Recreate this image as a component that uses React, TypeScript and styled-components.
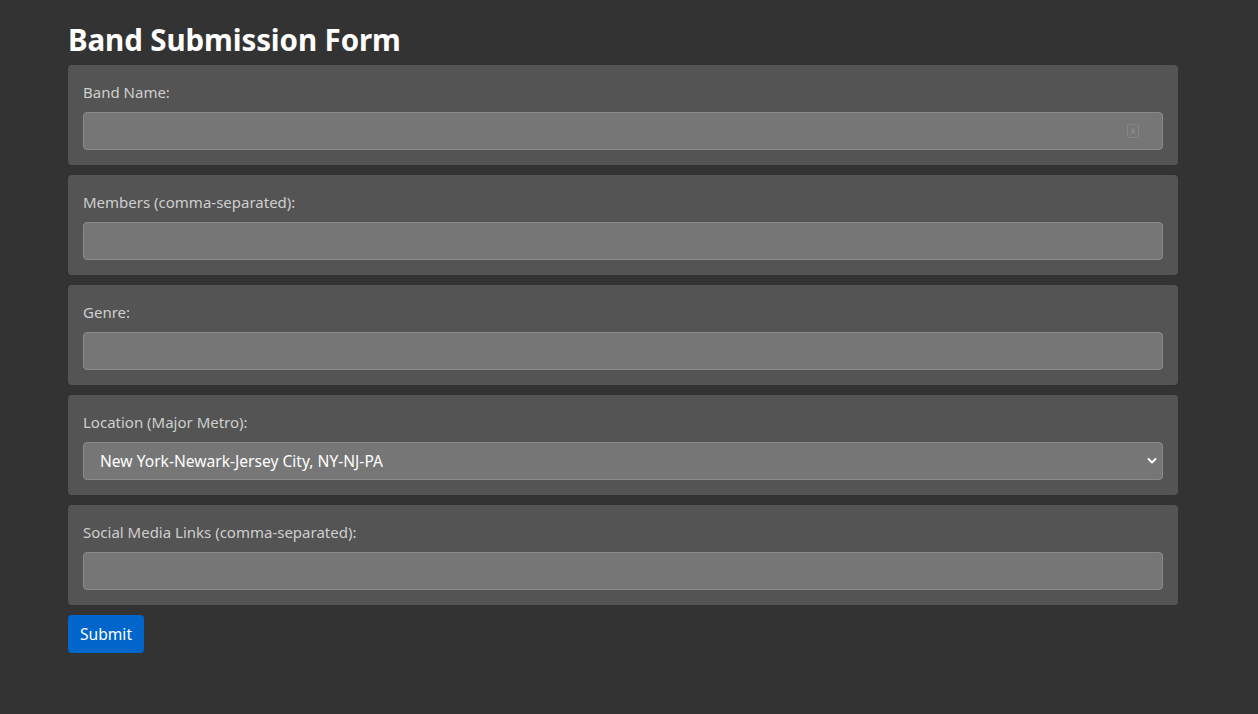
import React from "react";
import styled, { createGlobalStyle } from "styled-components";

const Global = createGlobalStyle`
  html, body { margin: 0; padding: 0; background: #333333; }
  body { font-family: "Noto Sans", "Open Sans", sans-serif; color: #ffffff; }
  * { box-sizing: border-box; }
`;

const Page = styled.div`
  width: 1110px;
  margin-left: 68px;
  padding-top: 18px;
`;

const Title = styled.h1`
  margin: 0 0 3px 0;
  font-size: 29.5px;
  font-weight: 700;
  line-height: 44px;
  letter-spacing: -0.1px;
  color: #ffffff;
`;

const Form = styled.form`
  display: flex;
  flex-direction: column;
  gap: 10px;
`;

const Card = styled.div`
  background: #545454;
  border-radius: 4px;
  padding: 15px;
  height: 100px;
`;

const Label = styled.label`
  display: block;
  font-size: 15px;
  line-height: 24px;
  color: #cfcfcf;
  margin-bottom: 8px;
`;

const FieldWrap = styled.div`
  position: relative;
`;

const Input = styled.input`
  display: block;
  width: 100%;
  height: 38px;
  background: #767676;
  border: 1px solid #8a8a8a;
  border-radius: 4px;
  color: #ffffff;
  font: inherit;
  font-size: 16px;
  padding: 0 16px;
  outline: none;
`;

const Select = styled.select`
  display: block;
  width: 100%;
  height: 38px;
  background: #767676;
  border: 1px solid #8a8a8a;
  border-radius: 4px;
  color: #ffffff;
  font: inherit;
  font-size: 15.6px;
  padding: 0 16px;
  appearance: none;
  outline: none;
`;

const Overlay = styled.span<{ $right: number }>`
  position: absolute;
  right: ${(p) => p.$right}px;
  top: 50%;
  transform: translateY(-50%);
  display: flex;
  pointer-events: none;
`;

const SubmitButton = styled.button`
  height: 38px;
  padding: 0 12px;
  background: #0066cc;
  color: #ffffff;
  border: none;
  border-radius: 4px;
  font: inherit;
  font-size: 15.6px;
  cursor: pointer;
`;

const KeyIcon = () => (
  <svg width="12" height="14" viewBox="0 0 12 14" fill="none">
    <rect x="0.5" y="0.5" width="11" height="13" rx="2" stroke="#868686" />
    <path d="M4 6.5 L6 4.5 L8 6.5 V9.5 H4 Z" fill="#868686" />
  </svg>
);

const Chevron = () => (
  <svg width="10" height="8" viewBox="0 0 10 8" fill="none">
    <path d="M1.5 2 L5 5.5 L8.5 2" stroke="#ffffff" strokeWidth="2" strokeLinecap="round" strokeLinejoin="round" />
  </svg>
);

export default function App() {
  return (
    <>
      <Global />
      <Page>
        <Title>Band Submission Form</Title>
        <Form onSubmit={(e) => e.preventDefault()}>
          <Card>
            <Label>Band Name:</Label>
            <FieldWrap>
              <Input type="text" />
              <Overlay $right={24}>
                <KeyIcon />
              </Overlay>
            </FieldWrap>
          </Card>
          <Card>
            <Label>Members (comma-separated):</Label>
            <Input type="text" />
          </Card>
          <Card>
            <Label>Genre:</Label>
            <Input type="text" />
          </Card>
          <Card>
            <Label>Location (Major Metro):</Label>
            <FieldWrap>
              <Select defaultValue="nyc">
                <option value="nyc">New York-Newark-Jersey City, NY-NJ-PA</option>
                <option value="la">Los Angeles-Long Beach-Anaheim, CA</option>
                <option value="chi">Chicago-Naperville-Elgin, IL-IN-WI</option>
              </Select>
              <Overlay $right={6}>
                <Chevron />
              </Overlay>
            </FieldWrap>
          </Card>
          <Card>
            <Label>Social Media Links (comma-separated):</Label>
            <Input type="text" />
          </Card>
          <div>
            <SubmitButton type="submit">Submit</SubmitButton>
          </div>
        </Form>
      </Page>
    </>
  );
}
